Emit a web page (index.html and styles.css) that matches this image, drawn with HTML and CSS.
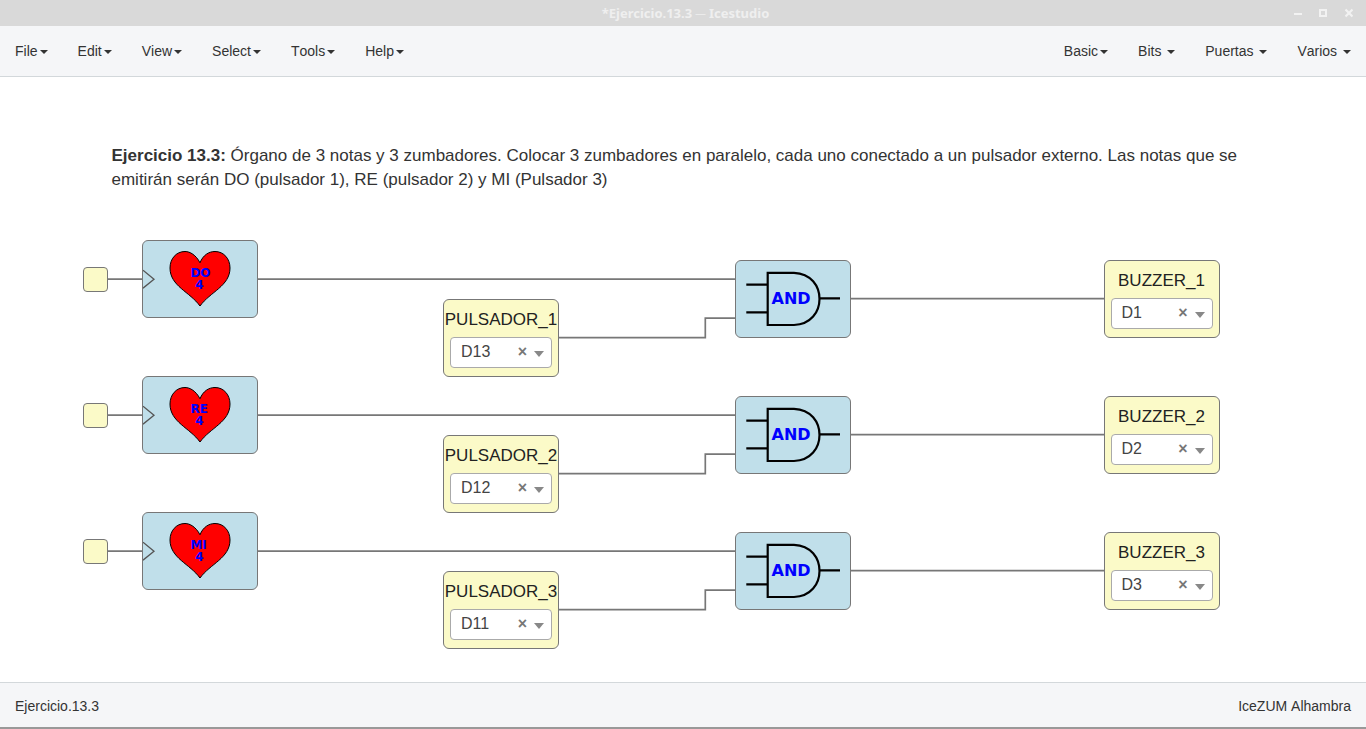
FILE: index.html
```html
<!DOCTYPE html>
<html lang="es">
<head>
<meta charset="utf-8">
<title>Icestudio</title>
<link rel="stylesheet" href="styles.css">
</head>
<body>
<header class="titlebar">
  <span class="title">*Ejercicio.13.3 <span class="dash">—</span> Icestudio</span>
  <svg class="controls" width="60" height="12" viewBox="0 0 60 12"><path d="M1 7h8" stroke-width="2"/><rect x="27" y="3" width="6" height="6" stroke-width="2"/><path d="M52.500 2.500l7 7M59.500 2.500l-7 7" stroke-width="2.200"/></svg>
</header>
<nav class="navbar">
  <div class="menu"><span>File<i class="caret"></i></span><span>Edit<i class="caret"></i></span><span>View<i class="caret"></i></span><span>Select<i class="caret"></i></span><span>Tools<i class="caret"></i></span><span>Help<i class="caret"></i></span></div>
  <div class="menu"><span>Basic<i class="caret"></i></span><span>Bits <i class="caret"></i></span><span>Puertas <i class="caret"></i></span><span>Varios <i class="caret"></i></span></div>
</nav>
<main class="canvas">
  <p class="note"><b>Ejercicio 13.3:</b> Órgano de 3 notas y 3 zumbadores. Colocar 3 zumbadores en paralelo, cada uno conectado a un pulsador externo. Las notas que se<br>emitirán serán DO (pulsador 1), RE (pulsador 2) y MI (Pulsador 3)</p>

  <svg class="defs" width="0" height="0">
    <defs>
      <g id="wires" fill="none" stroke="#777" stroke-width="1.700"><path d="M108 39.200H142M258 39.200H735M559 97.700H705.300V78.200H735M851 58.700H1104"/></g>
      <g id="heart"><path d="M0 29.200l11 9L0 47.200" fill="none" stroke="#555" stroke-width="1.300"/><path d="M57 21.800C53 14 47 10.500 42 10.500C33 10.500 27 18 27 27C27 45 47 51 57 65C67 51 87 45 87 27C87 18 81 10.500 72 10.500C66 10.500 60 14 57 21.800Z" fill="red" stroke="#000"/></g>
      <g id="gate" fill="none" stroke="#000" stroke-width="2.200"><path d="M31.700 11.800H58C92 13 92 63 58 64H31.700ZM10.300 23.700H31.700M10.300 51.300H31.700M83.500 37.400H104"/></g>
    </defs>
  </svg>

  <section class="circuit">
    <svg class="wires" width="1366" height="136"><use href="#wires"/></svg>
    <div class="node clock"></div>
    <div class="node tone"><svg width="114" height="76"><use href="#heart"/><text class="t12" x="47.400" y="36">DO</text><text class="t12" x="52.200" y="48">4</text></svg></div>
    <div class="node input"><div class="name">PULSADOR_1</div><div class="select"><span>D13</span><b>×</b><i></i></div></div>
    <div class="node and"><svg width="114" height="76"><use href="#gate"/><text class="t16" x="35.500" y="43">AND</text></svg></div>
    <div class="node output"><div class="name">BUZZER_1</div><div class="select"><span>D1</span><b>×</b><i></i></div></div>
  </section>
  <section class="circuit">
    <svg class="wires" width="1366" height="136"><use href="#wires"/></svg>
    <div class="node clock"></div>
    <div class="node tone"><svg width="114" height="76"><use href="#heart"/><text class="t12" x="47.400" y="36">RE</text><text class="t12" x="52.200" y="48">4</text></svg></div>
    <div class="node input"><div class="name">PULSADOR_2</div><div class="select"><span>D12</span><b>×</b><i></i></div></div>
    <div class="node and"><svg width="114" height="76"><use href="#gate"/><text class="t16" x="35.500" y="43">AND</text></svg></div>
    <div class="node output"><div class="name">BUZZER_2</div><div class="select"><span>D2</span><b>×</b><i></i></div></div>
  </section>
  <section class="circuit">
    <svg class="wires" width="1366" height="136"><use href="#wires"/></svg>
    <div class="node clock"></div>
    <div class="node tone"><svg width="114" height="76"><use href="#heart"/><text class="t12" x="47.400" y="36">MI</text><text class="t12" x="52.200" y="48">4</text></svg></div>
    <div class="node input"><div class="name">PULSADOR_3</div><div class="select"><span>D11</span><b>×</b><i></i></div></div>
    <div class="node and"><svg width="114" height="76"><use href="#gate"/><text class="t16" x="35.500" y="43">AND</text></svg></div>
    <div class="node output"><div class="name">BUZZER_3</div><div class="select"><span>D3</span><b>×</b><i></i></div></div>
  </section>
</main>
<footer class="footer"><span>Ejercicio.13.3</span><span>IceZUM Alhambra</span></footer>
</body>
</html>
```
FILE: styles.css
```css
* { box-sizing: border-box; }
body {
  margin: 0;
  height: 729px;
  display: flex;
  flex-direction: column;
  overflow: hidden;
  background: #fff;
  color: #333;
  font: 14px/20px "Liberation Sans", Arial, sans-serif;
}
.titlebar {
  height: 26px;
  flex: none;
  display: grid;
  grid-template-columns: 1fr auto 1fr;
  align-items: center;
  padding: 0 13px;
  background: #d9d9d9;
}
.title {
  grid-column: 2;
  padding-left: 5px;
  color: #efefef;
  font: bold 13px/26px "Noto Sans", sans-serif;
}
.dash { font: 10px/10px "Liberation Sans", sans-serif; vertical-align: 1px; }
.controls { justify-self: end; fill: none; stroke: #f2f2f2; }
.navbar {
  height: 51px;
  flex: none;
  display: flex;
  justify-content: space-between;
  align-items: center;
  padding: 0 15px;
  background: #f5f6f8;
  border-bottom: 1px solid #d3d8db;
}
.menu { display: flex; gap: 30px; white-space: pre; font-kerning: none; }
.caret {
  display: inline-block;
  margin-left: 2px;
  vertical-align: middle;
  border: 4px solid transparent;
  border-top-color: #333;
  border-bottom: 0;
}
.canvas { flex: 1; position: relative; padding-top: 67px; }
.note {
  height: 96px;
  margin: 0 0 0 111.5px;
  font-size: 17px;
  line-height: 24px;
  white-space: nowrap;
}
.defs { position: absolute; }
.circuit { position: relative; height: 136px; }
.wires { position: absolute; left: 0; top: 0; }
.node {
  position: absolute;
  width: 116px;
  height: 78px;
  border: 1px solid #777;
  border-radius: 6px;
  background: #c0dfea;
}
.node svg { display: block; }
.clock { left: 83px; top: 27px; width: 25px; height: 25px; background: #fbfac8; border-radius: 4px; }
.tone { left: 142px; top: 0; }
.input { left: 443px; top: 59px; background: #fbfac8; }
.and { left: 735px; top: 20px; }
.output { left: 1104px; top: 20px; background: #fbfac8; }
.name {
  height: 37px;
  display: flex;
  justify-content: center;
  color: #222;
  font-size: 17px;
  line-height: 40px;
}
.output .name { padding-right: 1px; }
.select {
  width: 102px;
  height: 31px;
  margin-left: 6px;
  padding: 0 7px 0 10px;
  display: flex;
  align-items: center;
  border: 1px solid #aaa;
  border-radius: 4px;
  background: #fff;
  color: #444;
  font-size: 16px;
  line-height: 28px;
}
.output .select { padding-left: 9.5px; padding-right: 7.5px; }
.select span { flex: 1; padding-bottom: 1px; }
.select b { color: #777; margin-right: 7px; padding-bottom: 1px; }
.select i {
  margin-top: 3px;
  border: 5px solid transparent;
  border-top: 6px solid #888;
  border-bottom: 0;
}
text { fill: blue; font-family: "DejaVu Sans", sans-serif; font-weight: bold; }
.t12 { font-size: 12px; }
.t16 { font-size: 16px; }
.footer {
  height: 47px;
  flex: none;
  display: flex;
  justify-content: space-between;
  padding: 13px 15px 0;
  border-top: 1px solid #d3d8db;
  border-bottom: 2px solid #999;
  background: #f5f6f8;
  font-kerning: none;
}
```
